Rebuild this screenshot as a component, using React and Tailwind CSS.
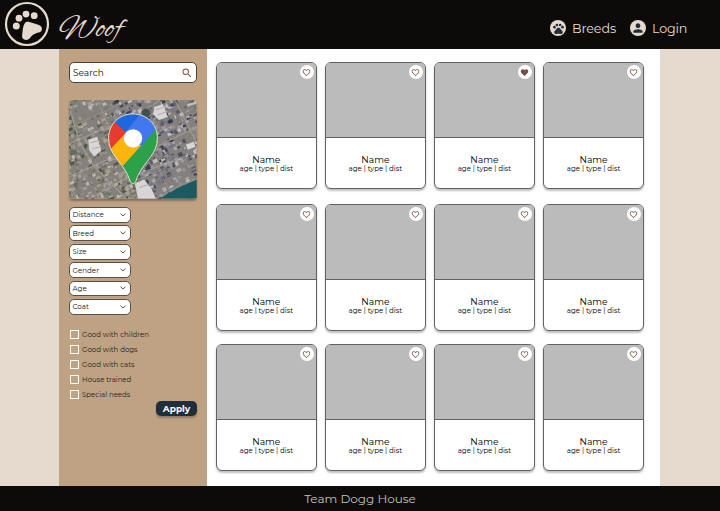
import React from "react";
import { MdPets, MdPerson, MdSearch, MdFavorite, MdFavoriteBorder } from "react-icons/md";

const FILTERS = ["Distance", "Breed", "Size", "Gender", "Age", "Coat"];
const TRAITS = ["Good with children", "Good with dogs", "Good with cats", "House trained", "Special needs"];

function PawLogo() {
  return (
    <svg className="h-[46px] w-[46px] shrink-0" viewBox="4 1 46 46" fill="#e6dace">
      <circle cx="27" cy="24" r="21" fill="none" stroke="#e6dace" strokeWidth="2.2" />
      <circle cx="16.3" cy="25.9" r="3.5" />
      <circle cx="19" cy="18.2" r="3.4" />
      <circle cx="26" cy="14.1" r="3.4" />
      <circle cx="34.2" cy="15.7" r="3.4" />
      <path d="M24.8 23.2C26 21.8 27.6 21.4 29.4 22L38.3 24.8C40.8 25.6 41.9 27.2 41.9 28.9C41.9 30.6 40.9 31.9 38.8 32.5C34.8 33.4 33 34.3 30.2 37.8C28.3 40 26 40.4 24.2 39.5C22.3 38.6 21.7 36.8 22.2 34.5C22.8 30.5 22.6 26 24.8 23.2Z" />
    </svg>
  );
}

// Small deterministic generator so that the rooftops stay put between renders.
function makeRandom(seed) {
  let s = seed;
  return () => {
    s = (s * 16807) % 2147483647;
    return s / 2147483647;
  };
}

const rand = makeRandom(4127);
const CITY = ["#b5b0b6", "#74748a", "#44455c", "#9b9799", "#2f3248", "#cfcbcd", "#676578", "#a39ca0", "#55566b"];
const SUBURB = ["#5f6c4c", "#b0a598", "#46543a", "#989085", "#c9c1b6", "#6b6a62", "#7a7f69", "#a8a096"];
const ROOFS = Array.from({ length: 2400 }, () => {
  const x = rand() * 210 - 40;
  const y = rand() * 190 - 45;
  const tones = x > 58 ? CITY : SUBURB;
  return { x, y, w: 1 + rand() * 4, h: 0.9 + rand() * 3.4, c: tones[Math.floor(rand() * tones.length)] };
});

const PIN = "M64 14C50 14 39.5 24.5 39.5 38C39.5 55 52 61 59 76C61 81 61.6 84 64 84C66.4 84 67 81 69 76C76 61 88.5 55 88.5 38C88.5 24.5 78 14 64 14Z";

function MapPreview() {
  return (
    <div className="mt-[17px] h-[98.5px] w-[128px] overflow-hidden rounded-[4px] shadow-[0_2px_2px_rgba(0,0,0,0.3)]">
      <svg className="block h-full w-full" viewBox="0 0 128 99">
        <rect width="128" height="99" fill="#85817e" />
        <g transform="rotate(-24 64 50)">
          {ROOFS.map((r, i) => (
            <rect key={i} x={r.x} y={r.y} width={r.w} height={r.h} fill={r.c} opacity="0.85" />
          ))}
        </g>
        <g fill="none" stroke="#aaa197" strokeWidth="1.3" opacity="0.75">
          <path d="M0 44L30 31L59 23L91 0M0 77L36 61L69 56L128 27M21 99L55 80L105 61M0 7L10 42L24 66L57 99M106 0L128 43" />
          <path d="M0 28L45 7L57 0M28 0L43 34M8 99L0 87M85 61L105 99M69 80L128 55" strokeWidth=".7" />
        </g>
        <g fill="#d8d5d6">
          <path d="M86 7L94 4L99 17L90 20L84 14Z" />
          <path d="M19 40L28 37L32 51L25 57L20 50Z" />
          <path d="M66 84L75 80L83 90L87 99H69Z" />
          <path d="M117 45L125 42L127 47L119 50Z" />
        </g>
        <g stroke="#a5a2a2" strokeWidth=".8">
          <path d="M87 10L95 7M89 15L97 12M21 43L29 41M23 49L31 47M70 88L79 85" />
        </g>
        <circle cx="77" cy="13" r="4.5" fill="#40514b" stroke="#707067" />
        <path d="M128 80L108 89L91 99H128Z" fill="#1d5960" />
        <path d="M128 79L107 88L88 99" fill="none" stroke="#8b928b" strokeWidth="1.2" />
        <clipPath id="pin-shape">
          <path d={PIN} />
        </clipPath>
        <g clipPath="url(#pin-shape)">
          <rect x="38" y="12" width="53" height="74" fill="#2da04a" />
          <path d="M38 12H91V27L64 39L54 35L38 20Z" fill="#1b68df" />
          <path d="M73 12L91 13V25L58 62L50 39Z" fill="#4178ed" />
          <path d="M36 20H44L57 33L40 55Z" fill="#e63b2e" />
          <path d="M57 33L37 54L54 66L72 46Z" fill="#fbb50c" />
          <path d="M91 25L53 69L62 86H91Z" fill="#2da04a" />
          <path d="M45 20L57 32L73 12H50Z" fill="#1b68df" />
        </g>
        <path d={PIN} fill="none" stroke="#dedfd6" strokeWidth="1" />
        <circle cx="64" cy="38.5" r="9.2" fill="white" />
      </svg>
    </div>
  );
}

function Header() {
  return (
    <header className="flex h-[49px] shrink-0 items-start bg-[#0c0b09] pl-1 pt-px text-[#e6dace]">
      <PawLogo />
      <div className="ml-[9px] mt-[11px] w-[73px] whitespace-nowrap font-['Alex_Brush','Liberation_Serif',cursive] text-[32.5px] leading-[36px]">
        Woof
      </div>
      <nav className="ml-auto mr-[33px] mt-[18px] flex h-[18px] items-center text-[12.7px]">
        <span className="flex size-4 items-center justify-center rounded-full bg-[#e6dace] text-[#1f2e38]">
          <MdPets size={13} />
        </span>
        <span className="ml-[6px] w-[44px] pt-px tracking-[-0.1px]">Breeds</span>
        <span className="ml-[14px] flex size-4 items-center justify-center rounded-full bg-[#e6dace] text-[#1f2e38]">
          <MdPerson size={14} />
        </span>
        <span className="ml-[6px] w-[35px] pt-px tracking-[-0.15px]">Login</span>
      </nav>
    </header>
  );
}

function Sidebar() {
  return (
    <aside className="flex w-[148px] shrink-0 flex-col bg-[#bfa283] px-[10px] pt-[13px]">
      <div className="flex h-[21px] w-[128px] shrink-0 items-center justify-between rounded-[5px] border border-[#4b4038] bg-white pl-[3px] pr-[3px] text-[9px] text-[#111]">
        <span>Search</span>
        <MdSearch size={12} className="text-[#8a4f3a]" />
      </div>
      <MapPreview />
      <div className="mt-[8.5px] flex flex-col gap-[2.6px]">
        {FILTERS.map((label) => (
          <div key={label} className="flex h-[15.8px] w-[61.5px] items-center justify-between rounded-[5px] border border-[#5b4f46] bg-white pl-[2.5px] pr-1 text-[7.1px] leading-none text-[#111]">
            <span>{label}</span>
            <svg width="6" height="4" viewBox="0 0 6 4" fill="none" stroke="#75503f" strokeWidth="1">
              <path d="M.5.7L3 3L5.5.7" />
            </svg>
          </div>
        ))}
      </div>
      <div className="mt-[12.7px] flex flex-col pl-[1px]">
        {TRAITS.map((label) => (
          <div key={label} className="flex h-[15px] items-center gap-[3px] text-[7px] leading-none text-[#241d18]">
            <span className="size-[9px] border border-white" />
            <span>{label}</span>
          </div>
        ))}
      </div>
      <button className="-mt-[1.5px] h-[15px] w-[41px] self-end rounded-[5px] bg-[#1f2e38] text-[9px] font-bold leading-[15px] text-white shadow-[0_2px_2px_rgba(0,0,0,0.25)]">
        Apply
      </button>
    </aside>
  );
}

function DogCard({ liked }) {
  return (
    <article className="flex h-[127px] flex-col overflow-hidden rounded-[6px] border border-[#626262] bg-white shadow-[0_1.5px_2px_rgba(0,0,0,0.25)]">
      <div className="flex h-[75px] shrink-0 justify-end border-b border-[#626262] bg-[#bbb] pr-[2px] pt-[2px]">
        <span className="flex size-[14px] items-center justify-center rounded-full bg-white text-[#75503f]">
          {liked ? <MdFavorite size={9} /> : <MdFavoriteBorder size={9} />}
        </span>
      </div>
      <div className="flex flex-col items-center pt-[16px] text-black">
        <div className="text-[9.2px] leading-[11px]">Name</div>
        <div className="whitespace-nowrap text-[7.1px] leading-[8px]">age | type | dist</div>
      </div>
    </article>
  );
}

export default function App() {
  return (
    <div className="flex h-[511px] w-[720px] flex-col overflow-hidden bg-[#e6dace] font-['Montserrat','DejaVu_Sans',sans-serif]">
      <Header />
      <div className="flex h-[437px] shrink-0 pl-[59px]">
        <Sidebar />
        <main className="grid w-[452.5px] grid-cols-[repeat(4,100.5px)] grid-rows-[142px_140px_127px] content-start items-start gap-x-[8.6px] bg-white pl-[9px] pt-[13px]">
          {Array.from({ length: 12 }, (_, i) => (
            <DogCard key={i} liked={i === 2} />
          ))}
        </main>
      </div>
      <footer className="flex h-[25px] shrink-0 items-center justify-center bg-[#0c0b09] text-[12px] text-[#cbc0b5]">
        Team Dogg House
      </footer>
    </div>
  );
}
